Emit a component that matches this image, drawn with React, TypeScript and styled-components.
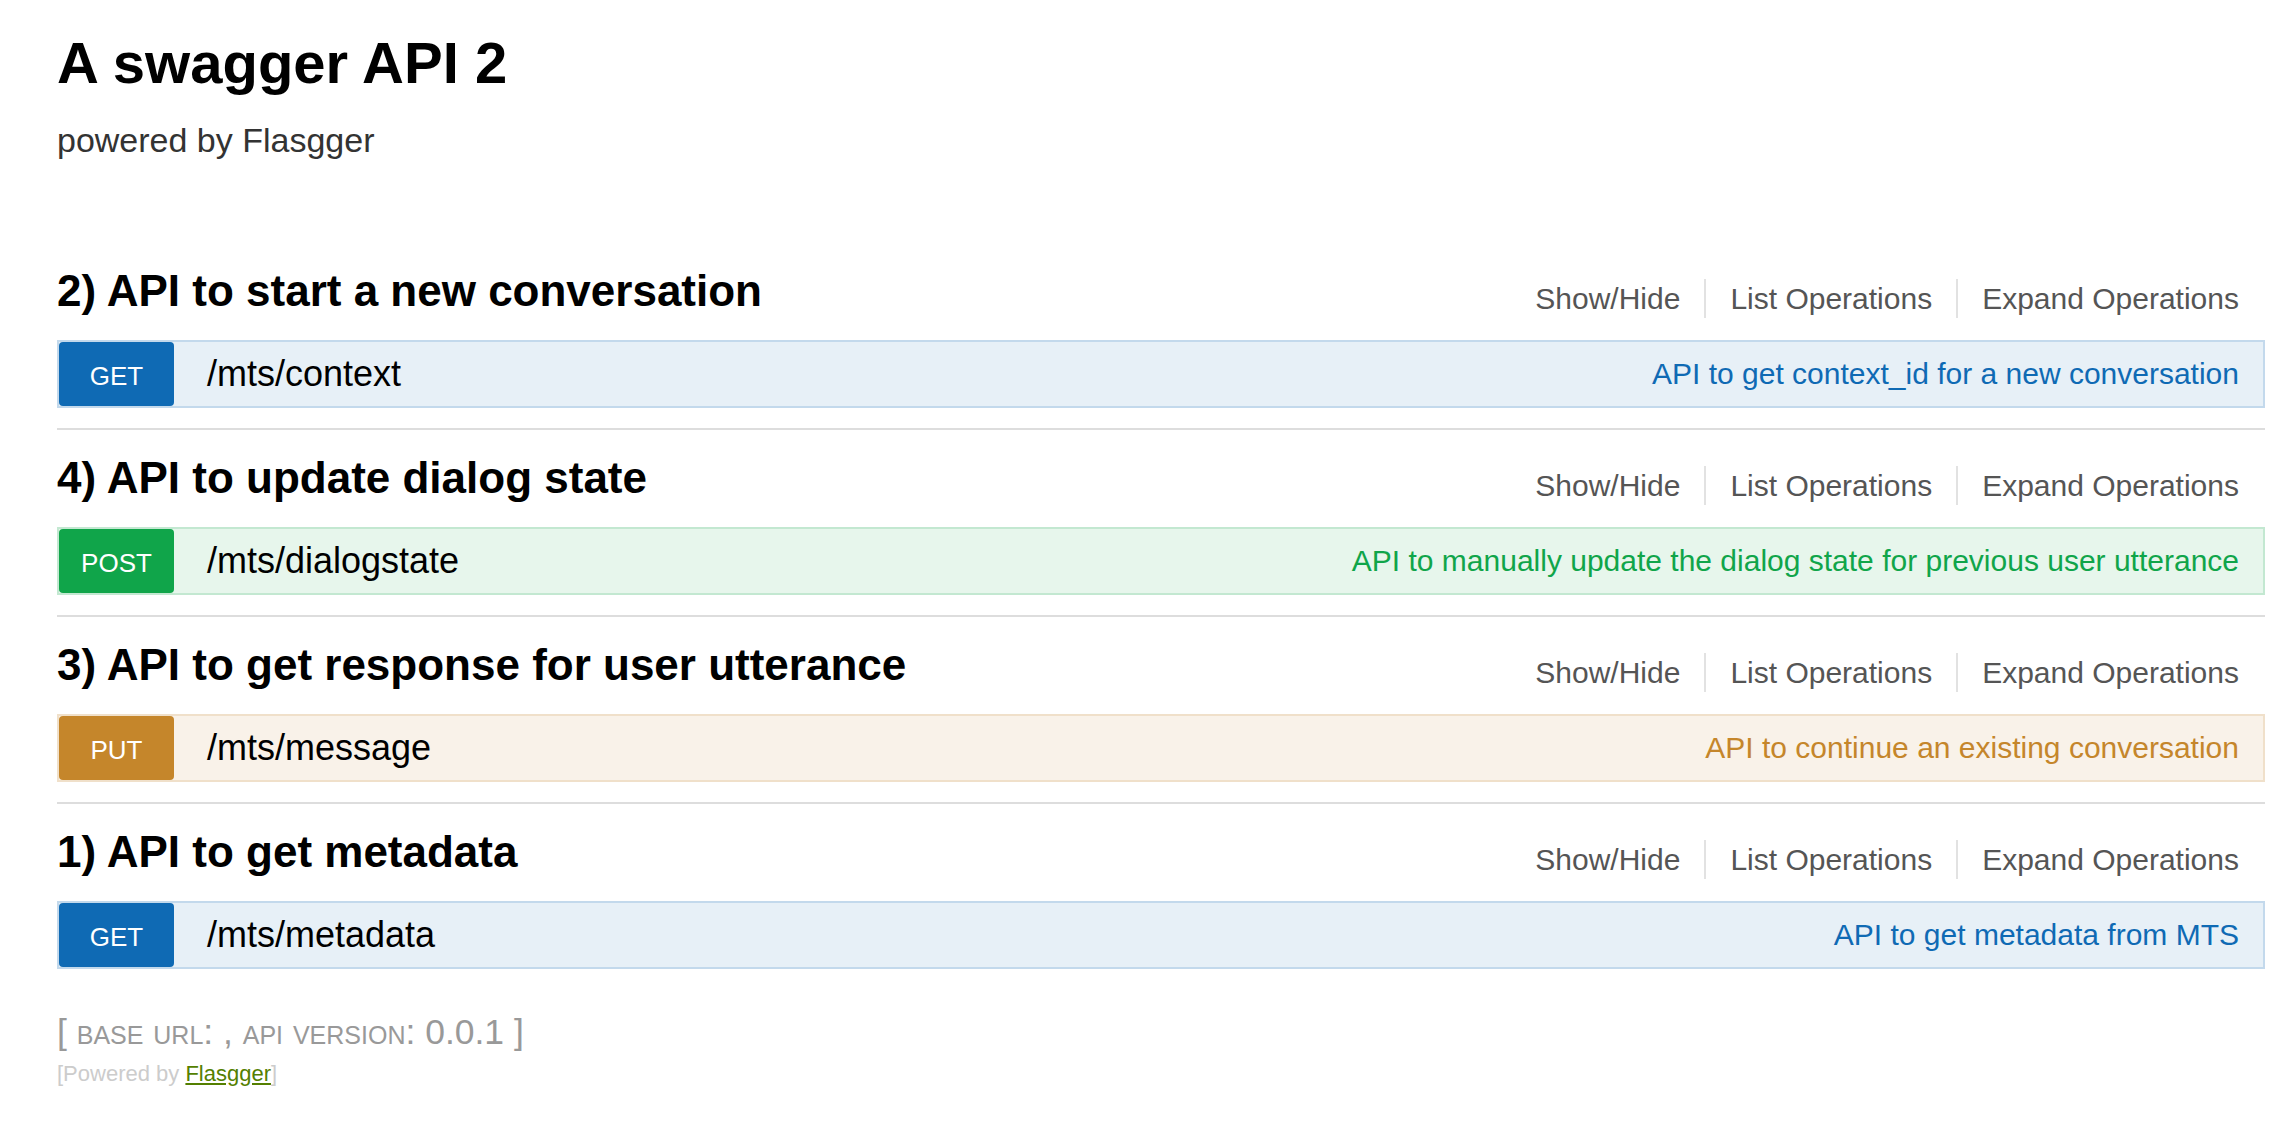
import styled, { createGlobalStyle } from "styled-components";

const GlobalStyle = createGlobalStyle`
  html, body {
    margin: 0;
    padding: 0;
    background: #fff;
  }
  body {
    font-family: "Liberation Sans", Arial, Helvetica, sans-serif;
  }
`;

type Method = "get" | "post" | "put";

const palette: Record<Method, { main: string; bg: string; border: string }> = {
  get: { main: "#0f6ab4", bg: "#e7f0f7", border: "#c3d9ec" },
  post: { main: "#10a54a", bg: "#e7f6ec", border: "#c3e8d1" },
  put: { main: "#c5862b", bg: "#f9f2e9", border: "#f0e0ca" },
};

const Page = styled.div`
  padding: 29px 19px 40px 57px;
`;

const Title = styled.h1`
  margin: 0;
  font-size: 58px;
  line-height: 68px;
  font-weight: bold;
  color: #000;
`;

const Subtitle = styled.p`
  margin: 23px 0 0;
  font-size: 34px;
  line-height: 40px;
  color: #333;
`;

const Resources = styled.ul`
  list-style: none;
  margin: 106px 0 0;
  padding: 0;
`;

const Resource = styled.li`
  padding: 23px 0 20px;
  border-bottom: 2px solid #ddd;

  &:first-child {
    padding-top: 0;
  }
  &:last-child {
    border-bottom: none;
  }
`;

const Heading = styled.div`
  display: flex;
  justify-content: space-between;
  align-items: flex-end;
  margin-bottom: 24px;
`;

const ResourceName = styled.h2`
  margin: 0;
  font-size: 44px;
  line-height: 50px;
  font-weight: bold;
  color: #000;
`;

const Options = styled.ul`
  display: flex;
  list-style: none;
  margin: 0 0 -2px;
  padding: 0;
`;

const Option = styled.li`
  padding: 2px 24px;
  font-size: 30px;
  line-height: 35px;
  color: #555;
  border-right: 2px solid #e2e2e2;

  &:last-child {
    border-right: none;
    padding-right: 26px;
  }
`;

const Operation = styled.div<{ $method: Method }>`
  display: flex;
  align-items: center;
  height: 68px;
  box-sizing: border-box;
  background: ${(p) => palette[p.$method].bg};
  border: 2px solid ${(p) => palette[p.$method].border};
`;

const Badge = styled.span<{ $method: Method }>`
  display: flex;
  align-items: center;
  justify-content: center;
  align-self: stretch;
  width: 115px;
  padding-top: 5px;
  box-sizing: border-box;
  border-radius: 4px;
  background: ${(p) => palette[p.$method].main};
  color: #fff;
  font-size: 26px;
  text-transform: uppercase;
`;

const Path = styled.span`
  margin-left: 33px;
  font-size: 36px;
  color: #000;
`;

const Summary = styled.span<{ $method: Method }>`
  margin-left: auto;
  padding-right: 24px;
  font-size: 30px;
  color: ${(p) => palette[p.$method].main};
`;

const Footer = styled.div`
  margin-top: 23px;
`;

const Version = styled.h4`
  margin: 0;
  font-size: 35.5px;
  line-height: 40px;
  font-weight: normal;
  font-variant: small-caps;
  color: #999;
`;

const Powered = styled.div`
  margin-top: 10px;
  font-size: 22px;
  line-height: 24px;
  color: #ccc;

  a {
    color: #547f00;
    text-decoration: underline;
  }
`;

const resources: { name: string; method: Method; path: string; summary: string }[] = [
  {
    name: "2) API to start a new conversation",
    method: "get",
    path: "/mts/context",
    summary: "API to get context_id for a new conversation",
  },
  {
    name: "4) API to update dialog state",
    method: "post",
    path: "/mts/dialogstate",
    summary: "API to manually update the dialog state for previous user utterance",
  },
  {
    name: "3) API to get response for user utterance",
    method: "put",
    path: "/mts/message",
    summary: "API to continue an existing conversation",
  },
  {
    name: "1) API to get metadata",
    method: "get",
    path: "/mts/metadata",
    summary: "API to get metadata from MTS",
  },
];

export default function App() {
  return (
    <>
      <GlobalStyle />
      <Page>
        <Title>A swagger API 2</Title>
        <Subtitle>powered by Flasgger</Subtitle>
        <Resources>
          {resources.map((r) => (
            <Resource key={r.path}>
              <Heading>
                <ResourceName>{r.name}</ResourceName>
                <Options>
                  <Option>Show/Hide</Option>
                  <Option>List Operations</Option>
                  <Option>Expand Operations</Option>
                </Options>
              </Heading>
              <Operation $method={r.method}>
                <Badge $method={r.method}>{r.method}</Badge>
                <Path>{r.path}</Path>
                <Summary $method={r.method}>{r.summary}</Summary>
              </Operation>
            </Resource>
          ))}
        </Resources>
        <Footer>
          <Version>[ base url: , api version: 0.0.1 ]</Version>
          <Powered>
            [Powered by <a href="#">Flasgger</a>]
          </Powered>
        </Footer>
      </Page>
    </>
  );
}
